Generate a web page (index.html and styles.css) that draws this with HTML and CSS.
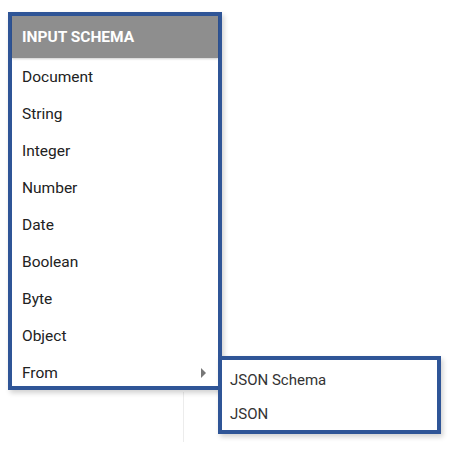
FILE: index.html
```html
<!DOCTYPE html>
<html>
<head>
<meta charset="utf-8">
<link rel="stylesheet" href="styles.css">
</head>
<body>
<div class="page">
  <div class="menu">
    <div class="menu-header">INPUT SCHEMA</div>
    <div class="menu-item">Document</div>
    <div class="menu-item">String</div>
    <div class="menu-item">Integer</div>
    <div class="menu-item">Number</div>
    <div class="menu-item">Date</div>
    <div class="menu-item">Boolean</div>
    <div class="menu-item">Byte</div>
    <div class="menu-item">Object</div>
    <div class="menu-item has-sub">
      <span>From</span>
      <span class="caret"></span>
      <div class="submenu">
        <div class="sub-item">JSON Schema</div>
        <div class="sub-item">JSON</div>
      </div>
    </div>
  </div>
</div>
</body>
</html>
```

FILE: styles.css
```css
html, body {
  margin: 0;
  padding: 0;
  background: #ffffff;
}
.page {
  width: 456px;
  height: 449px;
  box-sizing: border-box;
  padding: 12px 0 0 8px;
  background:
    linear-gradient(#ececec, #ececec) 183px 392px / 1px 50px no-repeat,
    #ffffff;
  font-family: Roboto, "Liberation Sans", sans-serif;
}
.menu {
  width: 214px;
  box-sizing: border-box;
  border: 4px solid #2f5597;
  background: #fff;
  box-shadow: 2px 3px 5px rgba(0,0,0,0.18);
}
.menu-header {
  height: 42px;
  background: #8e8e8e;
  color: #fff;
  font-weight: 700;
  font-size: 15.5px;
  display: flex;
  align-items: center;
  padding-left: 10px;
  box-shadow: 0 1px 2px rgba(0,0,0,0.2);
}
.menu-item {
  height: 37px;
  display: flex;
  align-items: center;
  justify-content: space-between;
  padding: 1px 12px 0 10px;
  box-sizing: border-box;
  font-size: 15.5px;
  color: #222;
}
.has-sub {
  position: relative;
  height: 32px;
  padding-top: 6px;
}
.caret {
  width: 0;
  height: 0;
  border-top: 5px solid transparent;
  border-bottom: 5px solid transparent;
  border-left: 5px solid #777;
}
.submenu {
  position: absolute;
  left: 100%;
  top: 2px;
  width: 223px;
  box-sizing: border-box;
  border: 4px solid #2f5597;
  background: #fff;
  padding-top: 3px;
  box-shadow: 2px 3px 5px rgba(0,0,0,0.18);
}
.sub-item {
  height: 34px;
  display: flex;
  align-items: center;
  padding-left: 8px;
  font-size: 15px;
  color: #333;
}
.sub-item:last-child {
  height: 33px;
}
```
